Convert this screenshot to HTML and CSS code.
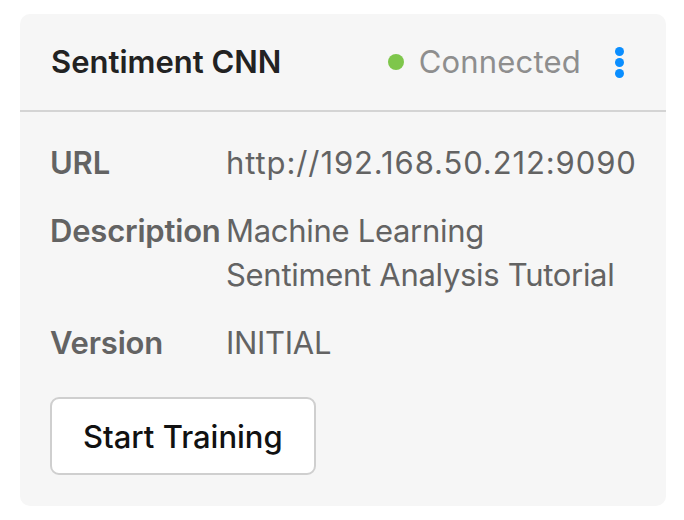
FILE: index.html
```html
<!DOCTYPE html>
<html lang="en">
<head>
    <meta charset="UTF-8">
    <meta name="viewport" content="width=device-width, initial-scale=1.0">
    <title>Sentiment CNN</title>
    <link rel="stylesheet" href="styles.css">
</head>
<body>

    <div class="card">
        <div class="card-header">
            <h2 class="card-title">Sentiment CNN</h2>
            <div class="status">
                <span class="status-dot"></span>
                <span class="status-text">Connected</span>
            </div>
            <button class="menu-btn" aria-label="More">
                <span></span><span></span><span></span>
            </button>
        </div>

        <div class="card-body">
            <dl class="info">
                <dt>URL</dt>
                <dd class="url">http://192.168.50.212:9090</dd>
                <dt>Description</dt>
                <dd class="desc">Machine Learning Sentiment Analysis Tutorial</dd>
                <dt>Version</dt>
                <dd>INITIAL</dd>
            </dl>
            <button class="train-btn">Start Training</button>
        </div>
    </div>

</body>
</html>
```

FILE: styles.css
```css
body {
    font-family: 'Inter', 'Liberation Sans', sans-serif;
    margin: 0;
    padding: 14px 18px 14px 20px;
    background: #ffffff;
    color: #222;
}
.card {
    background: #f6f6f6;
    border-radius: 10px;
    height: 492px;
    box-sizing: border-box;
}
.card-header {
    display: flex;
    align-items: center;
    height: 96px;
    padding: 0 39px 0 31px;
    border-bottom: 2px solid #d4d4d4;
}
.card-title {
    flex: 1;
    margin: 0;
    font-size: 31px;
    font-weight: 600;
    line-height: 44px;
    color: #222;
}
.status {
    display: flex;
    align-items: center;
    gap: 15px;
}
.status-dot {
    width: 16px;
    height: 16px;
    border-radius: 50%;
    background: #7ec64b;
}
.status-text {
    font-size: 31px;
    line-height: 44px;
    letter-spacing: 0.2px;
    color: #8e8e8e;
}
.menu-btn {
    display: flex;
    flex-direction: column;
    gap: 2px;
    margin-left: 31px;
    padding: 0 3px;
    border: none;
    background: none;
    cursor: pointer;
}
.menu-btn span {
    width: 9px;
    height: 9px;
    border-radius: 50%;
    background: #0a8eff;
}
.card-body {
    padding: 29px 28px 31px 30px;
}
.info {
    display: grid;
    grid-template-columns: 176px 1fr;
    row-gap: 24px;
    margin: 0 0 32px 0;
    font-size: 31px;
    line-height: 44px;
    color: #636363;
}
.info dt {
    font-weight: 600;
    letter-spacing: -0.2px;
}
.info dd {
    margin: 0;
    letter-spacing: -0.3px;
}
.info .url {
    white-space: nowrap;
    letter-spacing: 0.9px;
}
.info .desc {
    max-width: 400px;
}
.train-btn {
    font-family: inherit;
    height: 78px;
    padding: 0 31px;
    border: 2px solid #cfcfcf;
    border-radius: 9px;
    background: #ffffff;
    color: #111;
    font-size: 31px;
    font-weight: 500;
    cursor: pointer;
}
```
